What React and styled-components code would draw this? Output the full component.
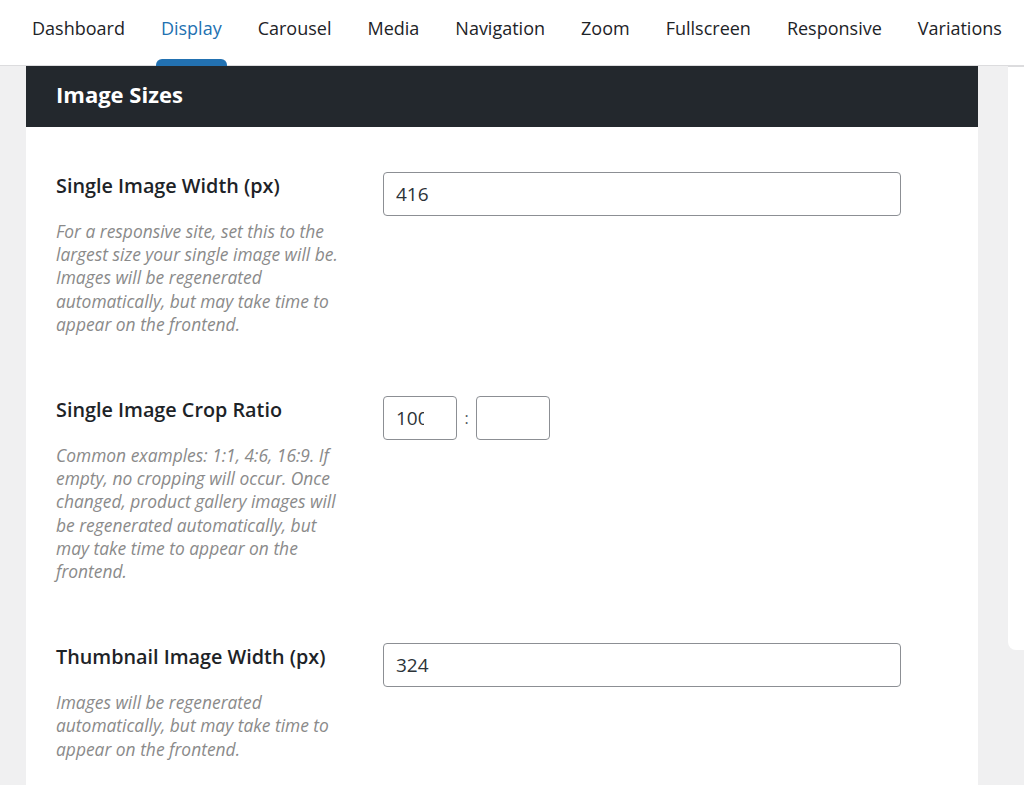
import styled, { createGlobalStyle } from "styled-components";

const GlobalStyle = createGlobalStyle`
  html, body {
    margin: 0;
    padding: 0;
    background: #f0f0f1;
    font-family: "Open Sans", "Noto Sans", sans-serif;
    color: #1d2327;
    overflow: hidden;
  }
  * { box-sizing: border-box; }
`;

const tabs = [
  "Dashboard",
  "Display",
  "Carousel",
  "Media",
  "Navigation",
  "Zoom",
  "Fullscreen",
  "Responsive",
  "Variations",
];

const fields = [
  {
    label: "Single Image Width (px)",
    desc: "For a responsive site, set this to the largest size your single image will be. Images will be regenerated automatically, but may take time to appear on the frontend.",
    value: "416",
  },
  {
    label: "Single Image Crop Ratio",
    desc: "Common examples: 1:1, 4:6, 16:9. If empty, no cropping will occur. Once changed, product gallery images will be regenerated automatically, but may take time to appear on the frontend.",
    ratio: ["100", ""],
  },
  {
    label: "Thumbnail Image Width (px)",
    desc: "Images will be regenerated automatically, but may take time to appear on the frontend.",
    value: "324",
  },
];

export default function App() {
  return (
    <>
      <GlobalStyle />
      <Page>
        <TopNav>
          {tabs.map((t) => (
            <Tab key={t} $active={t === "Display"}>
              {t}
            </Tab>
          ))}
        </TopNav>
        <Body>
          <Panel>
            <PanelHeader>Image Sizes</PanelHeader>
            <PanelContent>
              {fields.map((f) => (
                <FieldRow key={f.label}>
                  <LabelCol>
                    <FieldLabel>{f.label}</FieldLabel>
                    <FieldDesc>{f.desc}</FieldDesc>
                  </LabelCol>
                  <InputCol>
                    {f.ratio ? (
                      <RatioWrap>
                        <SmallInput defaultValue={f.ratio[0]} />
                        <Colon>:</Colon>
                        <SmallInput defaultValue={f.ratio[1]} />
                      </RatioWrap>
                    ) : (
                      <TextInput defaultValue={f.value} />
                    )}
                  </InputCol>
                </FieldRow>
              ))}
            </PanelContent>
          </Panel>
          <SidePanel />
        </Body>
      </Page>
    </>
  );
}

// Styled components

const Page = styled.div`
  display: flex;
  flex-direction: column;
  width: 1024px;
  height: 785px;
  overflow: hidden;
`;

const TopNav = styled.nav`
  display: flex;
  align-items: stretch;
  height: 66px;
  background: #fff;
  border-bottom: 1px solid #dcdcde;
  padding-left: 27px;
  gap: 26px;
`;

const Tab = styled.div`
  position: relative;
  display: flex;
  align-items: flex-start;
  padding: 15px 5px 0;
  font-size: 18px;
  line-height: 26px;
  color: ${(p) => (p.$active ? "#2271b1" : "#1d2327")};
  white-space: nowrap;
  &::after {
    content: "";
    display: ${(p) => (p.$active ? "block" : "none")};
    position: absolute;
    left: 0;
    right: 0;
    bottom: -1px;
    height: 7px;
    background: #2271b1;
    border-radius: 6px 6px 0 0;
  }
`;

const Body = styled.div`
  flex: 1;
  display: flex;
  align-items: flex-start;
  padding-left: 26px;
  gap: 30px;
`;

const Panel = styled.section`
  width: 952px;
  flex-shrink: 0;
  background: #fff;
  align-self: stretch;
`;

const PanelHeader = styled.h2`
  margin: 0;
  height: 61px;
  display: flex;
  align-items: center;
  padding: 0 30px 5px;
  background: #23282d;
  color: #fff;
  font-size: 22px;
  font-weight: 700;
`;

const PanelContent = styled.div`
  display: flex;
  flex-direction: column;
  gap: 60px;
  padding: 45px 30px 0;
`;

const FieldRow = styled.div`
  display: flex;
  align-items: flex-start;
`;

const LabelCol = styled.div`
  width: 327px;
  flex-shrink: 0;
  display: flex;
  flex-direction: column;
  gap: 20px;
`;

const FieldLabel = styled.div`
  font-size: 19.8px;
  line-height: 28px;
  font-weight: 600;
  color: #1d2327;
`;

const FieldDesc = styled.p`
  margin: 0;
  width: 292px;
  font-size: 17.4px;
  line-height: 23.2px;
  font-style: italic;
  color: #8a8a8a;
`;

const InputCol = styled.div`
  flex: 1;
`;

const baseInput = `
  height: 44px;
  border: 1px solid #8c8f94;
  border-radius: 4px;
  background: #fff;
  font-family: "Open Sans", "Noto Sans", sans-serif;
  font-size: 19px;
  color: #2c3338;
  padding: 0 12px;
  outline: none;
`;

const TextInput = styled.input`
  ${baseInput}
  width: 518px;
`;

const RatioWrap = styled.div`
  display: flex;
  align-items: center;
`;

const SmallInput = styled.input`
  ${baseInput}
  width: 74px;
  padding-right: 32px;
`;

const Colon = styled.span`
  width: 19px;
  text-align: center;
  font-size: 16px;
  color: #50575e;
`;

const SidePanel = styled.div`
  flex: 1;
  height: 584px;
  background: #fff;
  border-top: 1px solid #dcdcde;
  border-bottom-left-radius: 8px;
`;
